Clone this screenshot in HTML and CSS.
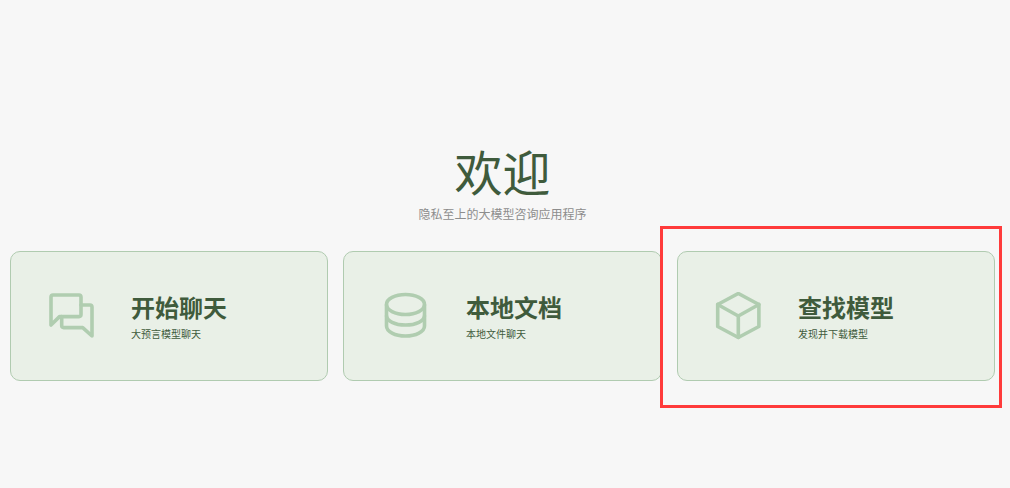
FILE: index.html
```html
<!DOCTYPE html>
<html lang="zh-CN">
<head>
<meta charset="utf-8">
<title>欢迎</title>
<link rel="stylesheet" href="styles.css">
</head>
<body>
<main class="welcome">
  <header class="hero">
    <h1 class="hero-title">欢迎</h1>
    <p class="hero-sub">隐私至上的大模型咨询应用程序</p>
  </header>
  <section class="cards">
    <a class="card">
      <svg class="card-icon" viewBox="0 0 48 48" fill="none" stroke="currentColor" stroke-width="3.6" stroke-linejoin="round" stroke-linecap="round"><path d="M4 33V5a2 2 0 0 1 2-2H32a2 2 0 0 1 2 2V22.600a2 2 0 0 1-2 2H12.500z"/><path d="M34 13H43a2 2 0 0 1 2 2V44L35.700 35.600H16.700a2 2 0 0 1-2-2V24.600"/></svg>
      <div class="card-text"><h2 class="card-title">开始聊天</h2><p class="card-sub">大预言模型聊天</p></div>
    </a>
    <a class="card card-docs">
      <svg class="card-icon" viewBox="0 0 48 48" fill="none" stroke="currentColor" stroke-width="3.600"><ellipse cx="25.500" cy="12.500" rx="19" ry="10"/><path d="M6.500 12.500V34C6.500 39.500 15 44 25.500 44S44.500 39.500 44.500 34V12.500"/><path d="M6.500 23.500C6.500 29 15 33 25.500 33S44.500 29 44.500 23.500"/></svg>
      <div class="card-text"><h2 class="card-title">本地文档</h2><p class="card-sub">本地文件聊天</p></div>
    </a>
    <a class="card">
      <svg class="card-icon" viewBox="0 0 48 48" fill="none" stroke="currentColor" stroke-width="3.600" stroke-linejoin="round" stroke-linecap="round"><path d="M24.300 1.500L44.900 12.500V34.500L24.300 45.500L3.700 34.500V12.500z"/><path d="M3.700 12.500L24.300 24L44.900 12.500M24.300 24V45.500"/></svg>
      <div class="card-text"><h2 class="card-title">查找模型</h2><p class="card-sub">发现并下载模型</p></div>
    </a>
  </section>
</main>
<div class="highlight"></div>
</body>
</html>
```
FILE: styles.css
```css
html, body {
  margin: 0;
  height: 100%;
  background: #f7f7f7;
  overflow: hidden;
}
body {
  font-family: "Noto Sans CJK SC", "Liberation Sans", sans-serif;
  color: #3f5b3c;
}
.welcome {
  width: 1005px;
  padding-top: 136px;
  display: flex;
  flex-direction: column;
  align-items: center;
}
.hero {
  text-align: center;
  height: 115px;
}
.hero-title {
  margin: 0;
  font-size: 48px;
  font-weight: 400;
  line-height: 69px;
}
.hero-sub {
  margin: 0;
  font-size: 12px;
  line-height: 18px;
  color: #8d8d8d;
}
.cards {
  width: 100%;
  box-sizing: border-box;
  padding: 0 10px;
  display: flex;
  gap: 15.4px;
}
.card {
  flex: 1 1 0;
  height: 130px;
  box-sizing: border-box;
  background: #e9f0e7;
  border: 1px solid #b0cbb0;
  border-radius: 10px;
  display: flex;
  align-items: center;
  padding-left: 36px;
}
.card-icon {
  width: 48px;
  height: 48px;
  color: #b0cdb0;
  flex: none;
}
.card-text {
  margin-left: 36px;
}
.card-docs .card-text {
  margin-left: 37.5px;
}
.card-title {
  margin: 0 0 4px;
  font-size: 24px;
  font-weight: 700;
  line-height: 32px;
}
.card-sub {
  margin: 0;
  font-size: 10px;
  line-height: 14px;
}
.highlight {
  position: absolute;
  left: 660px;
  top: 226px;
  width: 336px;
  height: 176px;
  border: 3px solid #ff3b3b;
}
```
